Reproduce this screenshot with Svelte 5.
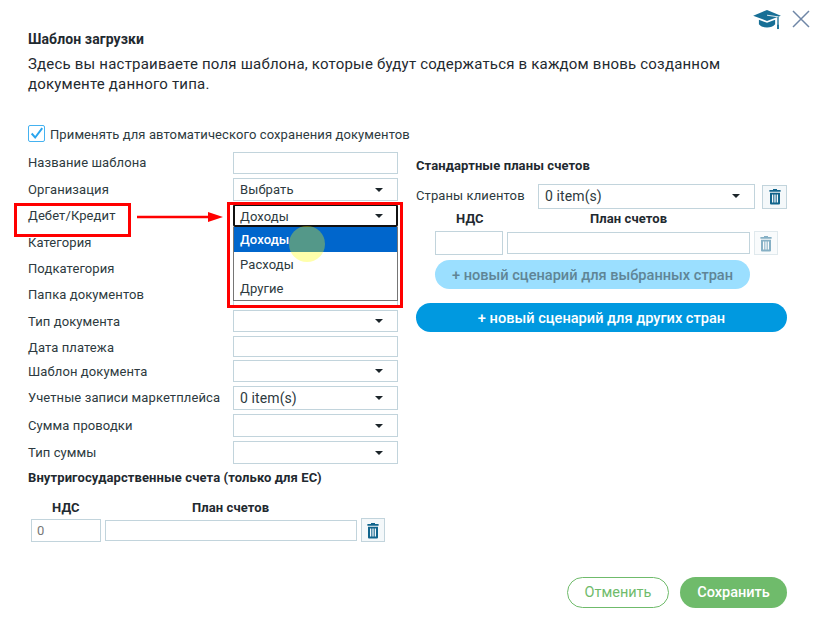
<script>
  const rows = [
    { label: 'Название шаблона', kind: 'input', h: 22, m: 0, shift: 'up' },
    { label: 'Организация', kind: 'select', value: 'Выбрать', h: 23, m: 4 },
    { label: 'Дебет/Кредит', kind: 'open', value: 'Доходы', h: 23, m: 3 },
    { label: 'Категория', kind: 'select', h: 23, m: 4 },
    { label: 'Подкатегория', kind: 'select', h: 23, m: 3 },
    { label: 'Папка документов', kind: 'input', h: 23, m: 3 },
    { label: 'Тип документа', kind: 'select', h: 22, m: 4 },
    { label: 'Дата платежа', kind: 'input', h: 21, m: 4, shift: 'down' },
    { label: 'Шаблон документа', kind: 'select', h: 22, m: 3 },
    { label: 'Учетные записи маркетплейса', kind: 'select', value: '0 item(s)', big: true, h: 24, m: 4, shift: 'up' },
    { label: 'Сумма проводки', kind: 'select', h: 23, m: 4 },
    { label: 'Тип суммы', kind: 'select', h: 23, m: 4 }
  ];
</script>

{#snippet trash()}
  <svg class="trash" viewBox="0 0 12 16" width="12" height="17" aria-hidden="true">
    <path d="M4 1.500V.6h4v.9h3.600v1.700H.4V1.500z" fill="currentColor" />
    <path fill-rule="evenodd" d="M1 4.200h10V15a1 1 0 0 1-1 1H2a1 1 0 0 1-1-1zM3 6v8h1.300V6zm2.350 0v8h1.300V6zM7.700 6v8H9V6z" fill="currentColor" />
  </svg>
{/snippet}

{#snippet caret()}
  <span class="caret"></span>
{/snippet}

<div class="dialog">
  <div class="topbar">
    <svg class="cap" viewBox="0 0 30 22" width="29" height="21" aria-hidden="true">
      <path d="M0 7 14.500 1 29 7 14.500 12.500z" fill="#176f96" />
      <path d="M6 11.200 14.500 14.500 23 11.200V16c-2 2.400-5 3.400-8.500 3.400S8 18.400 6 16z" fill="#176f96" />
      <path d="M14.500 6.500 26 8.200V17" fill="none" stroke="#fff" stroke-width=".9" />
      <path d="M26 8.500V17" stroke="#176f96" stroke-width="1.400" />
      <rect x="25" y="16.500" width="2" height="4.500" fill="#176f96" />
    </svg>
    <svg class="close" viewBox="0 0 18 18" width="18" height="18" aria-hidden="true">
      <path d="M1 1 17 17M17 1 1 17" stroke="#6f86a6" stroke-width="1.500" fill="none" />
    </svg>
  </div>

  <h1>Шаблон загрузки</h1>
  <p class="intro">Здесь вы настраиваете поля шаблона, которые будут содержаться в каждом вновь созданном документе данного типа.</p>

  <label class="apply">
    <span class="check">
      <svg viewBox="0 0 17 17" width="17" height="17" aria-hidden="true">
        <path d="M3 8.500 7 13 15 2.500" fill="none" stroke="#2aa5ee" stroke-width="2.200" />
      </svg>
    </span>
    <span class="apply-text">Применять для автоматического сохранения документов</span>
  </label>

  <div class="columns">
    <div class="left">
      {#each rows as row}
        <div class="row" style="height:{row.h}px;margin-top:{row.m}px">
          <span class="label {row.shift ?? ''}">{row.label}</span>
          {#if row.kind === 'input'}
            <div class="field"></div>
          {:else if row.kind === 'select'}
            <div class="field select" class:big={row.big}><span>{row.value ?? ''}</span>{@render caret()}</div>
          {:else}
            <div class="dropwrap">
              <div class="field select focused"><span class="focus-value">{row.value}</span>{@render caret()}</div>
              <ul class="menu">
                <li class="active">Доходы</li>
                <li>Расходы</li>
                <li>Другие</li>
              </ul>
              <span class="spot"></span>
              <span class="redbox menu-box"></span>
            </div>
          {/if}
        </div>
      {/each}

      <h2 class="intra">Внутригосударственные счета (только для ЕС)</h2>
      <div class="heads heads-left"><b class="vat-h">НДС</b><b class="plan-h">План счетов</b></div>
      <div class="vat-row">
        <div class="field vat zero">0</div>
        <div class="field plan"></div>
        <button class="icon-btn">{@render trash()}</button>
      </div>
    </div>

    <div class="right">
      <h2>Стандартные планы счетов</h2>
      <div class="countries">
        <span class="clabel">Страны клиентов</span>
        <div class="field select cselect"><span>0 item(s)</span>{@render caret()}</div>
        <button class="icon-btn">{@render trash()}</button>
      </div>
      <div class="scenario">
        <div class="heads"><b class="vat-h2">НДС</b><b class="plan-h2">План счетов</b></div>
        <div class="vat-row2">
          <div class="field vat2"></div>
          <div class="field plan2"></div>
          <button class="icon-btn faded">{@render trash()}</button>
        </div>
        <button class="pill light">+ новый сценарий для выбранных стран</button>
      </div>
      <button class="pill blue">+ новый сценарий для других стран</button>
    </div>
  </div>

  <div class="footer">
    <button class="action ghost">Отменить</button>
    <button class="action solid">Сохранить</button>
  </div>

  <span class="redbox label-box"></span>
  <svg class="arrow" viewBox="0 0 86 12" width="86" height="12" aria-hidden="true">
    <path d="M0 6H72" stroke="#f00" stroke-width="2.500" />
    <path d="M71 1 86 6 71 11z" fill="#f00" />
  </svg>
</div>

<style>
  :global(body) {
    margin: 0;
    background: #fff;
  }
  .dialog {
    position: relative;
    width: 819px;
    height: 620px;
    box-sizing: border-box;
    padding: 0 32px 0 28px;
    font-family: Roboto, sans-serif;
    font-size: 13px;
    letter-spacing: 0.1px;
    color: #2d3a40;
    overflow: hidden;
  }
  .topbar {
    display: flex;
    justify-content: flex-end;
    align-items: center;
    gap: 10px;
    height: 20px;
    padding-top: 9px;
    margin-right: -23px;
  }
  h1 {
    margin: 0;
    height: 20px;
    font-size: 14px;
    line-height: 20px;
    font-weight: 700;
    color: #1f2a30;
  }
  .intro {
    margin: 5px 0 0;
    width: 720px;
    font-size: 15px;
    line-height: 20px;
    letter-spacing: 0.2px;
    color: #1f2a30;
  }
  .apply {
    display: flex;
    align-items: center;
    gap: 5px;
    margin-top: 31px;
    height: 17px;
    white-space: nowrap;
  }
  .apply-text { margin-top: 2px; }
  .check {
    width: 15px;
    height: 15px;
    border: 1px solid #45b2f0;
    border-radius: 2px;
    display: flex;
    align-items: center;
    justify-content: center;
  }
  .columns {
    display: flex;
    margin-top: 10px;
  }
  .left { width: 370px; flex: none; }
  .right { margin-left: 18px; flex: 1; }
  .row {
    display: flex;
    align-items: center;
  }
  .label {
    width: 205px;
    flex: none;
    white-space: nowrap;
  }
  .up { margin-top: -2px; }
  .down { margin-top: 2px; }
  .field {
    box-sizing: border-box;
    border: 1px solid #c2d4dc;
    background: #fff;
    width: 165px;
    height: 100%;
  }
  .select {
    display: flex;
    align-items: center;
    justify-content: space-between;
    padding: 0 14px 0 6px;
    color: #2d3a40;
  }
  .big { font-size: 14px; }
  .caret {
    width: 0;
    height: 0;
    border-left: 4px solid transparent;
    border-right: 4px solid transparent;
    border-top: 4px solid #1c252a;
  }
  .dropwrap {
    position: relative;
    height: 100%;
    width: 165px;
  }
  .focused {
    border: 2px solid #111;
    border-radius: 2px;
    padding-left: 5px;
    padding-right: 13px;
    position: relative;
  }
  .focus-value { margin-top: 2px; }
  .menu {
    position: absolute;
    left: 0;
    top: 23px;
    width: 165px;
    box-sizing: border-box;
    margin: 0;
    padding: 0;
    list-style: none;
    background: #fff;
    border: 1px solid #767676;
    border-top: 0;
    z-index: 2;
  }
  .menu li {
    height: 24px;
    line-height: 26px;
    padding-left: 6px;
  }
  .menu .active {
    height: 25px;
    background: #0066cc;
    color: #fff;
    font-weight: 500;
  }
  .spot {
    position: absolute;
    left: 56px;
    top: 22px;
    width: 36px;
    height: 36px;
    border-radius: 50%;
    background: rgba(255, 255, 0, 0.33);
    z-index: 3;
  }
  .redbox {
    position: absolute;
    box-sizing: border-box;
    border: 3px solid #f00;
    z-index: 4;
  }
  .menu-box {
    left: -6px;
    top: -2px;
    width: 176px;
    height: 106px;
  }
  .label-box {
    left: 14px;
    top: 203px;
    width: 117px;
    height: 34px;
  }
  .arrow {
    position: absolute;
    left: 137px;
    top: 211px;
  }
  h2 {
    margin: 0;
    font-size: 13px;
    font-weight: 700;
    color: #1f2a30;
  }
  .intra {
    margin-top: 5px;
    height: 18px;
    line-height: 18px;
  }
  .heads {
    display: flex;
    font-weight: 700;
    height: 18px;
    line-height: 18px;
  }
  .heads b { font-weight: 700; color: #1f2a30; font-size: 13px; }
  .heads-left { margin-top: 12px; }
  .vat-h { margin-left: 24px; width: 140px; }
  .vat-row {
    display: flex;
    gap: 4px;
    margin-top: 1px;
    margin-left: 3px;
    height: 24px;
  }
  .vat {
    width: 70px;
    height: 23px;
    margin-top: 1px;
    padding-left: 5px;
    line-height: 21px;
    color: #777;
  }
  .plan { width: 252px; height: 21px; margin-top: 2px; }
  .icon-btn {
    box-sizing: border-box;
    width: 24px;
    height: 24px;
    padding: 0;
    display: flex;
    align-items: center;
    justify-content: center;
    border: 1px solid #c2d4dc;
    background: #f4f8fa;
    color: #10648c;
  }
  .right h2 { margin-top: 6px; height: 26px; line-height: 16px; }
  .countries {
    display: flex;
    align-items: center;
    height: 25px;
  }
  .clabel { width: 122px; flex: none; white-space: nowrap; margin-top: -2px; }
  .cselect { width: 217px; height: 25px; font-size: 14px; padding-bottom: 1px; }
  .countries .icon-btn { margin-left: 7px; width: 25px; }
  .scenario { margin-left: 19px; margin-top: 1px; }
  .vat-h2 { margin-left: 21px; width: 134px; }
  .vat-row2 {
    display: flex;
    align-items: center;
    gap: 4px;
    margin-top: 3px;
    height: 24px;
  }
  .vat2 { width: 68px; height: 24px; }
  .plan2 { width: 243px; height: 22px; }
  .faded { opacity: 0.5; }
  .pill {
    display: block;
    box-sizing: border-box;
    height: 29px;
    border: 0;
    border-radius: 15px;
    padding: 0;
    font-family: inherit;
    font-size: 14.600px;
    font-weight: 500;
    letter-spacing: 0;
    text-align: center;
  }
  .light {
    width: 315px;
    margin-top: 5px;
    background: #9bdfff;
    color: #5f8596;
  }
  .blue {
    width: 371px;
    margin-top: 14px;
    background: #0099e0;
    color: #fff;
  }
  .footer {
    position: absolute;
    right: 32px;
    top: 577px;
    display: flex;
    gap: 11px;
  }
  .action {
    box-sizing: border-box;
    height: 31px;
    border-radius: 16px;
    font-family: inherit;
    font-size: 14.500px;
    letter-spacing: 0;
    font-weight: 500;
    padding: 0;
  }
  .ghost {
    width: 102px;
    background: #fff;
    border: 1px solid #6fbb6b;
    color: #6fbb6b;
    font-weight: 400;
  }
  .solid {
    width: 107px;
    background: #6fbb6b;
    border: 0;
    color: #fff;
  }
</style>
